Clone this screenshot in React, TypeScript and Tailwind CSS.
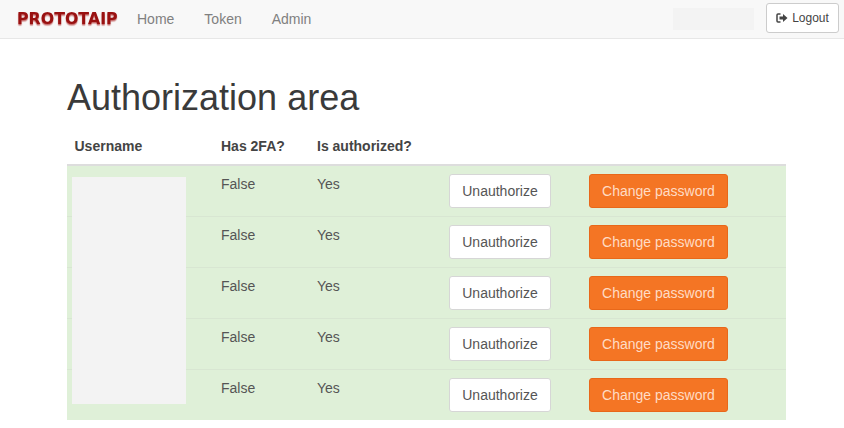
import React from 'react';

const users = [0, 1, 2, 3, 4];

const LogOutIcon = () => (
  <svg width="12" height="12" viewBox="0 0 12 12" className="shrink-0">
    <path d="M4.500 2H2a1 1 0 0 0-1 1v6a1 1 0 0 0 1 1h2.500" fill="none" stroke="#444" strokeWidth="1.500" />
    <path d="M3.500 4.500H7V2l4.500 4L7 10V7.500H3.500z" fill="#444" />
  </svg>
);

const Navbar = () => (
  <nav className="h-[39px] flex items-center bg-[#f8f8f8] border-b border-[#e7e7e7]">
    <span className="ml-[17px] w-[101px] font-['DejaVu_Sans'] font-bold text-[15.8px] leading-none text-[#991111] whitespace-nowrap blur-[0.4px] [text-shadow:0_1px_1px_#b0303099,0_2px_1px_#b0303055]">
      PROTOTAIP
    </span>
    <a className="ml-[19px] text-[#808080]">Home</a>
    <a className="ml-[30px] text-[#808080]">Token</a>
    <a className="ml-[30px] text-[#808080]">Admin</a>
    <div className="ml-auto w-[81px] h-[22px] bg-[#f3f3f3]"></div>
    <button className="ml-[12px] mr-[5px] mb-[2px] h-[30px] w-[73px] flex items-center justify-center gap-1 bg-white border border-[#ccc] rounded-[3px] text-[12px] text-[#444]">
      <LogOutIcon />
      Logout
    </button>
  </nav>
);

export default function App() {
  return (
    <div className="w-[844px] h-[428px] overflow-hidden bg-white font-['Liberation_Sans',Arial,sans-serif] text-[14px] leading-[20px] text-[#444]">
      <Navbar />
      <div className="mx-[67px] w-[719px]">
        <h1 className="mt-[39px] mb-[10px] text-[36px] leading-[40px] font-normal text-[#3a3a3a]">Authorization area</h1>
        <div className="relative">
          <table className="w-full table-fixed border-collapse">
            <colgroup>
              <col className="w-[146px]" />
              <col className="w-[96px]" />
              <col className="w-[132px]" />
              <col className="w-[140px]" />
              <col />
            </colgroup>
            <thead>
              <tr className="border-b-2 border-[#ddd]">
                <th className="py-2 pl-[7.500px] pr-2 text-left font-bold">Username</th>
                <th className="p-2 text-left font-bold">Has 2FA?</th>
                <th className="p-2 text-left font-bold">Is authorized?</th>
                <th className="p-2"></th>
                <th className="p-2"></th>
              </tr>
            </thead>
            <tbody>
              {users.map((u) => (
                <tr key={u} className="bg-[#dff0d8] border-t border-[#d8e6d2] first:border-t-0">
                  <td className="p-2 align-top"></td>
                  <td className="p-2 align-top text-[#555]">False</td>
                  <td className="p-2 align-top text-[#555]">Yes</td>
                  <td className="p-2 align-top">
                    <button className="h-[34px] w-[102px] bg-white border border-[#d6d6d6] rounded-[3px] text-[#555]">Unauthorize</button>
                  </td>
                  <td className="p-2 align-top">
                    <button className="h-[34px] w-[139px] bg-[#f47524] border border-[#e8681a] rounded-[3px] text-[#ffdcc4]">Change password</button>
                  </td>
                </tr>
              ))}
            </tbody>
          </table>
          {/* blanked out usernames */}
          <div className="absolute left-[5px] top-[49px] w-[114px] h-[227px] bg-[#f3f3f3]"></div>
        </div>
      </div>
    </div>
  );
}
